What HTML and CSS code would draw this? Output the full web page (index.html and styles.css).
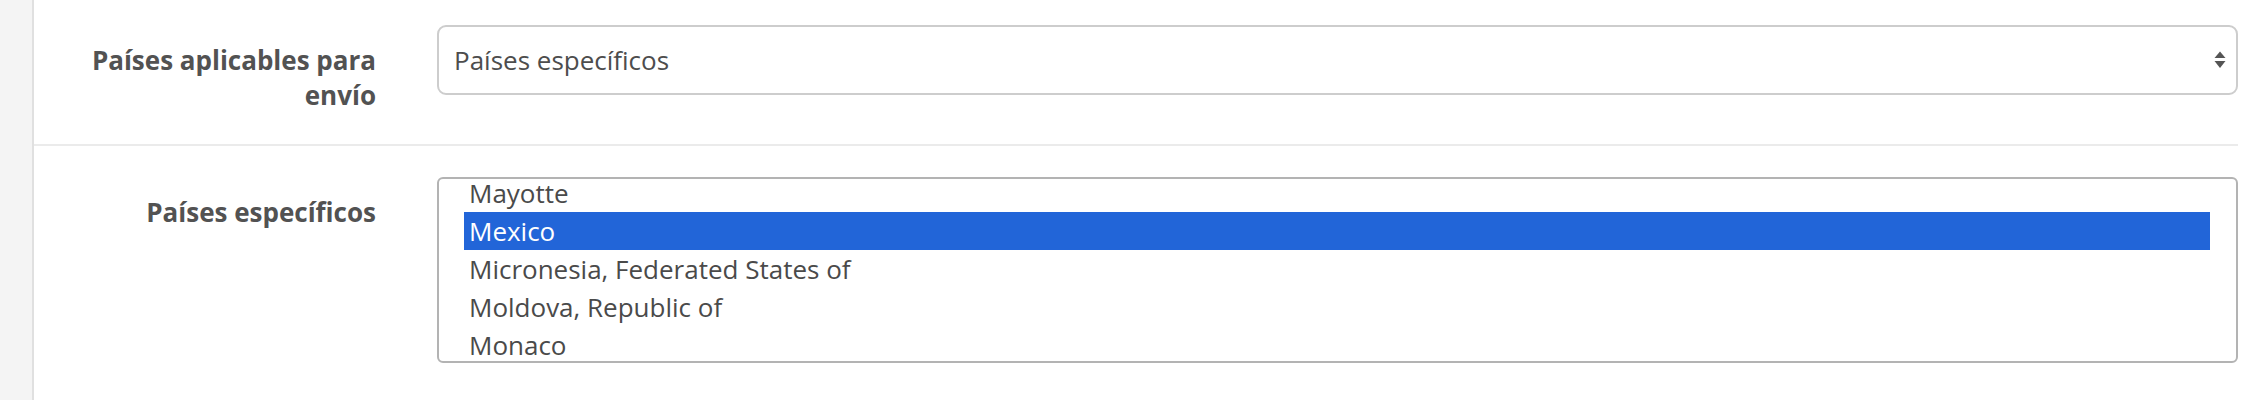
FILE: index.html
```html
<!DOCTYPE html>
<html lang="es">
<head>
<meta charset="utf-8">
<link rel="stylesheet" href="styles.css">
</head>
<body>
<div class="page">
  <aside class="side"></aside>
  <main class="content">
    <div class="row row-first">
      <div class="label">Países aplicables para envío</div>
      <div class="field">
        <div class="select">
          <span class="select-text">Países específicos</span>
          <span class="arrows">
            <svg width="12" height="18" viewBox="0 0 12 18"><path d="M6 0.5 L11.5 7 L0.5 7 Z" fill="#555"/><path d="M0.5 10 L11.5 10 L6 17 Z" fill="#555"/></svg>
          </span>
        </div>
      </div>
    </div>
    <div class="row row-second">
      <div class="label">Países específicos</div>
      <div class="field">
        <div class="listbox">
          <ul class="options">
            <li class="opt">Mayotte</li>
            <li class="opt selected">Mexico</li>
            <li class="opt">Micronesia, Federated States of</li>
            <li class="opt">Moldova, Republic of</li>
            <li class="opt">Monaco</li>
          </ul>
        </div>
      </div>
    </div>
  </main>
</div>
</body>
</html>
```

FILE: styles.css
```css
html, body {
  margin: 0;
  padding: 0;
  background: #ffffff;
}
body {
  font-family: "Open Sans", "Liberation Sans", sans-serif;
  width: 2260px;
  height: 400px;
  overflow: hidden;
}
.page {
  display: flex;
  height: 400px;
}
.side {
  width: 32px;
  flex: 0 0 32px;
  background: #f4f4f4;
  border-right: 2px solid #e0e0e0;
}
.content {
  flex: 1;
  display: flex;
  flex-direction: column;
  padding-right: 22px;
}
.row {
  display: flex;
  align-items: flex-start;
  gap: 61px;
  padding-bottom: 31px;
}
.row-first {
  padding-top: 25px;
  border-bottom: 2px solid #ebebeb;
}
.row-second {
  padding-top: 31px;
}
.label {
  width: 342px;
  flex: 0 0 342px;
  text-align: right;
  font-weight: 700;
  font-size: 26px;
  line-height: 35px;
  color: #525252;
  margin-top: 18px;
}
.field {
  flex: 1;
}
.select {
  height: 70px;
  box-sizing: border-box;
  border: 2px solid #cdcdcd;
  border-radius: 9px;
  display: flex;
  align-items: center;
  justify-content: space-between;
  padding: 0 10px 0 15px;
  background: #fff;
}
.select-text {
  font-size: 26px;
  color: #4d4d4d;
  line-height: 36px;
}
.arrows {
  display: flex;
  align-items: center;
}
.arrows svg {
  display: block;
}
.listbox {
  height: 186px;
  box-sizing: border-box;
  border: 2px solid #b3b3b3;
  border-radius: 6px;
  overflow: hidden;
  padding: 0 26px 0 25px;
  background: #fff;
}
.options {
  list-style: none;
  margin: -5px 0 0 0;
  padding: 0;
}
.opt {
  height: 38px;
  line-height: 38px;
  font-size: 26px;
  color: #4a4a4a;
  padding-left: 5px;
  white-space: nowrap;
}
.opt.selected {
  background: #2265d8;
  color: #ffffff;
}
```
